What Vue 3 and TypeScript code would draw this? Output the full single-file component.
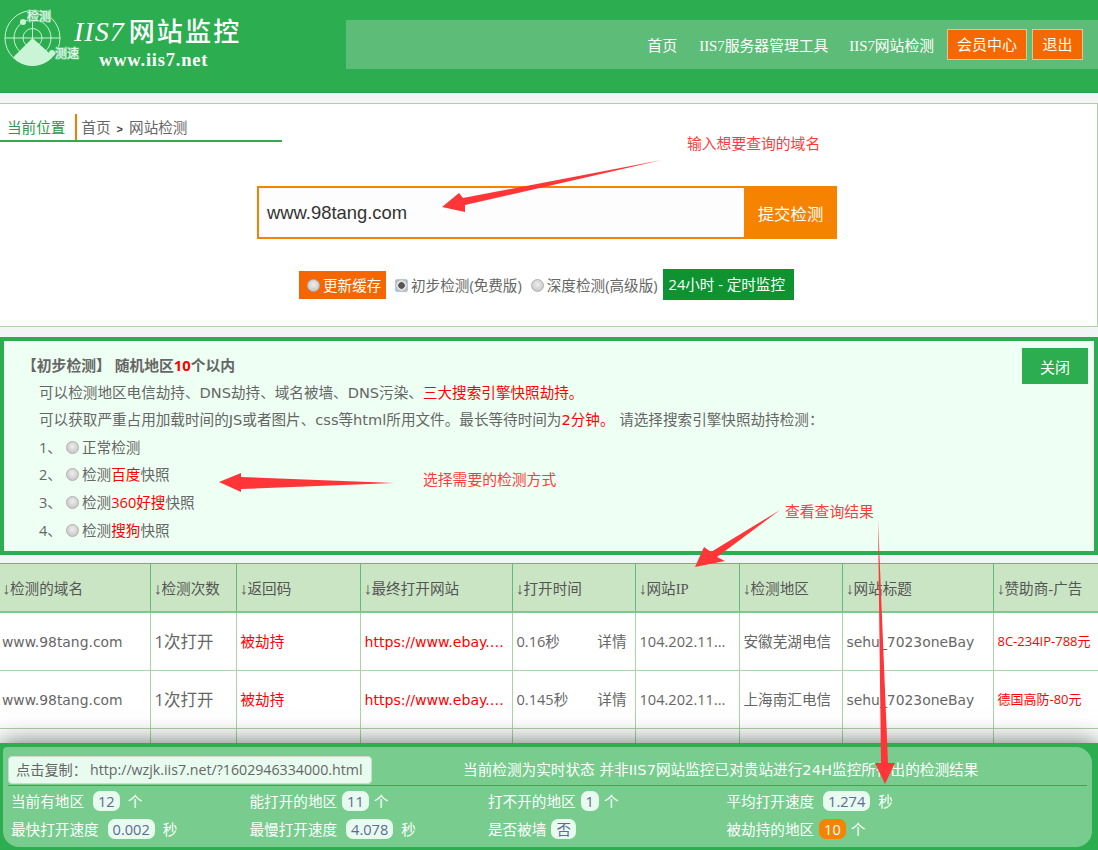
<script setup lang="ts">
interface Row { domain: string; count: string; code: string; url: string; time: string; ip: string; area: string; title: string; ad: string }
const heads: string[] = ['检测的域名', '检测次数', '返回码', '最终打开网站', '打开时间', '网站IP', '检测地区', '网站标题', '赞助商-广告']
const widths: number[] = [150, 86, 124, 152, 123, 104, 103, 151, 105]
const rows: Row[] = [
  { domain: 'www.98tang.com', count: '1次打开', code: '被劫持', url: 'https://www.ebay.com/', time: '0.16秒', ip: '104.202.117.36', area: '安徽芜湖电信', title: 'sehu_7023oneBay', ad: '8C-234IP-788元' },
  { domain: 'www.98tang.com', count: '1次打开', code: '被劫持', url: 'https://www.ebay.com/', time: '0.145秒', ip: '104.202.117.36', area: '上海南汇电信', title: 'sehu_7023oneBay', ad: '德国高防-80元' }
]
</script>

<template>
  <div class="page">
    <header class="header">
      <div class="logo">
        <svg class="logo-mark" width="84" height="72" viewBox="0 0 84 72">
          <circle cx="32.5" cy="38" r="27.5" fill="none" stroke="#c9f5d6" stroke-width="1" />
          <circle cx="32.5" cy="38" r="18.5" fill="none" stroke="#c9f5d6" stroke-width="1" />
          <circle cx="32.5" cy="38" r="9.5" fill="none" stroke="#c9f5d6" stroke-width="1" />
          <line x1="5" y1="38" x2="60" y2="38" stroke="#c9f5d6" stroke-width="1" />
          <line x1="32.5" y1="10" x2="32.5" y2="40" stroke="#c9f5d6" stroke-width="1" />
          <path d="M32.5 38 L13 57.5 A27.5 27.5 0 0 0 53 56.5 Z" fill="#c9f5d6" />
          <circle cx="23" cy="22" r="3" fill="#c9f5d6" />
          <circle cx="52" cy="53" r="3" fill="#c9f5d6" />
          <text x="27" y="21" class="logo-tag">检测</text>
          <text x="55" y="58" class="logo-tag">测速</text>
        </svg>
        <div class="logo-text">
          <div class="logo-title"><span class="logo-latin">IIS7</span>网站监控</div>
          <div class="logo-url">www.iis7.net</div>
        </div>
      </div>
      <nav class="nav">
        <a class="nav-link">首页</a>
        <a class="nav-link">IIS7服务器管理工具</a>
        <a class="nav-link">IIS7网站检测</a>
        <a class="nav-btn wide">会员中心</a>
        <a class="nav-btn">退出</a>
      </nav>
    </header>

    <section class="search-card">
      <div class="crumb">
        <span class="crumb-here">当前位置</span>
        <span class="crumb-path">首页<b>&gt;</b>网站检测</span>
      </div>
      <div class="search-box">
        <div class="search-input">www.98tang.com</div>
        <button class="search-btn">提交检测</button>
      </div>
      <div class="options">
        <span class="opt-cache"><i class="radio"></i>更新缓存</span>
        <span class="opt"><i class="radio checked"></i>初步检测(免费版)</span>
        <span class="opt"><i class="radio"></i>深度检测(高级版)</span>
        <span class="opt-timer">24小时 - 定时监控</span>
      </div>
    </section>

    <section class="info">
      <button class="close">关闭</button>
      <div class="info-title">【初步检测】 随机地区<em>10</em>个以内</div>
      <div class="info-line wide-latin">可以检测地区电信劫持、DNS劫持、域名被墙、DNS污染、<span class="red">三大搜索引擎快照劫持。</span></div>
      <div class="info-line wide-latin">可以获取严重占用加载时间的JS或者图片、css等html所用文件。最长等待时间为<span class="red">2分钟。</span> 请选择搜索引擎快照劫持检测：</div>
      <div class="info-line"><span class="num">1、</span><i class="radio"></i>正常检测</div>
      <div class="info-line"><span class="num">2、</span><i class="radio"></i>检测<span class="red">百度</span>快照</div>
      <div class="info-line"><span class="num">3、</span><i class="radio"></i>检测<span class="red">360好搜</span>快照</div>
      <div class="info-line"><span class="num">4、</span><i class="radio"></i>检测<span class="red">搜狗</span>快照</div>
    </section>

    <table class="result">
      <colgroup>
        <col v-for="(w, i) in widths" :key="i" :style="{ width: w + 'px' }" />
      </colgroup>
      <thead>
        <tr><th v-for="h in heads" :key="h"><span class="arrow">↓</span>{{ h }}</th></tr>
      </thead>
      <tbody>
        <tr v-for="(r, i) in rows" :key="i">
          <td class="latin">{{ r.domain }}</td>
          <td class="big">{{ r.count }}</td>
          <td class="red">{{ r.code }}</td>
          <td class="red latin url"><div class="clip">{{ r.url }}</div></td>
          <td><div class="time"><span>{{ r.time }}</span><span>详情</span></div></td>
          <td class="ip"><div class="clip">{{ r.ip }}</div></td>
          <td>{{ r.area }}</td>
          <td class="latin">{{ r.title }}</td>
          <td class="red ad">{{ r.ad }}</td>
        </tr>
        <tr class="empty"><td v-for="h in heads" :key="h"></td></tr>
      </tbody>
    </table>

    <footer class="summary">
      <div class="summary-inner">
        <div class="summary-top">
          <span class="copy">点击复制：<span class="copy-url">http://wzjk.iis7.net/?1602946334000.html</span></span>
          <span class="notice">当前检测为实时状态 并非IIS7网站监控已对贵站进行24H监控所得出的检测结果</span>
        </div>
        <div class="stats">
          <span>当前有地区<b class="pill">12</b>个</span>
          <span>能打开的地区<b class="pill tight">11</b>个</span>
          <span>打不开的地区<b class="pill tight">1</b>个</span>
          <span>平均打开速度<b class="pill">1.274</b>秒</span>
          <span>最快打开速度<b class="pill">0.002</b>秒</span>
          <span>最慢打开速度<b class="pill">4.078</b>秒</span>
          <span>是否被墙<b class="pill tight">否</b></span>
          <span>被劫持的地区<b class="pill orange tight">10</b>个</span>
        </div>
      </div>
    </footer>

    <svg class="marks" width="1098" height="850" viewBox="0 0 1098 850">
      <polygon points="442,207 459,193 463,198 662,160 465,205 465,212" />
      <polygon points="219,482 241,473 241,477 394,483 241,489 241,492" />
      <polygon points="695,567 704,547 711,552 780,510 717,557 725,561" />
      <polygon points="878,520 888,763 895,763 885,784 875,763 881,763" />
    </svg>
    <span class="note n1">输入想要查询的域名</span>
    <span class="note n2">选择需要的检测方式</span>
    <span class="note n3">查看查询结果</span>
  </div>
</template>

<style scoped>
.page {
  position: relative;
  width: 1098px;
  height: 850px;
  overflow: hidden;
  background: #f3f4f6;
  color: #666;
  font: 14.6px "Open Sans", "Noto Sans CJK SC", sans-serif;
}
.red { color: #f00; }
i { font-style: normal; }

.header {
  height: 93px;
  display: flex;
  align-items: flex-start;
  background: #2bad50;
  border-bottom: 1px solid #25a348;
  box-sizing: border-box;
}
.logo { width: 346px; display: flex; flex: none; }
.logo-mark { flex: none; }
.logo-tag {
  font: 400 12px "Noto Sans CJK SC", sans-serif;
  fill: #f2fff6;
  stroke: #6fcb8c;
  stroke-width: 1.5px;
  paint-order: stroke;
}
.logo-text { margin-left: -10px; color: #fff; }
.logo-title {
  margin-top: 14px;
  font: 500 26px/32px "Noto Sans CJK SC", serif;
  letter-spacing: 2.2px;
  white-space: nowrap;
}
.logo-latin {
  font: italic 400 28px/32px "Liberation Serif", serif;
  letter-spacing: 1px;
  margin-right: 4px;
}
.logo-url {
  margin: 1px 0 0 25px;
  font: 700 18.5px/22px "Liberation Serif", serif;
  letter-spacing: 0.8px;
}
.nav {
  flex: 1;
  height: 49px;
  margin-top: 20px;
  padding-right: 15px;
  display: flex;
  align-items: center;
  justify-content: flex-end;
  background: #5dbd78;
  color: #fff;
}
.nav-link { margin-right: 21px; white-space: nowrap; font-size: 14.8px; font-family: "Liberation Serif", "Noto Sans CJK SC", serif; }
.nav-link:first-child { margin-right: 22px; font-size: 15px; }
.nav-link:nth-child(3) { margin-right: 13px; }
.nav-btn {
  width: 51px;
  height: 31px;
  box-sizing: border-box;
  border: 1px solid #d8c89a;
  background: #f56800;
  line-height: 29px;
  text-align: center;
  font-size: 15px;
}
.nav-btn.wide { width: 80px; margin-right: 5px; }

.search-card {
  height: 224px;
  margin-top: 10px;
  box-sizing: border-box;
  border: 1px solid #a9d5a5;
  border-left: 0;
  background: #fff;
  overflow: hidden;
}
.crumb {
  width: 282px;
  height: 26px;
  margin-top: 10px;
  display: flex;
  border-bottom: 2px solid #2bad50;
  line-height: 27px;
}
.crumb-here { padding: 0 10px 0 7px; color: #2a9a4a; border-right: 2px solid #f57c00; white-space: nowrap; }
.crumb-path { padding-left: 4px; }
.crumb-path b { margin: 0 6px; font: 700 11px "Liberation Sans", sans-serif; color: #444; }
.search-box {
  width: 580px;
  height: 53px;
  margin: 44px 0 0 257px;
  display: flex;
  background: #f58300;
}
.search-input {
  flex: 1;
  margin: 2px 0 2px 2px;
  padding-left: 8px;
  background: #fdfdfd;
  color: #333;
  font: 18.4px/49px "Liberation Sans", sans-serif;
}
.search-btn {
  width: 93px;
  border: 0;
  padding: 0;
  background: #f58300;
  color: #fff;
  font: 16.4px "Noto Sans CJK SC", sans-serif;
}
.options {
  margin-top: 30px;
  padding-left: 299px;
  display: flex;
  align-items: center;
  font-size: 14.6px;
  line-height: 28px;
  white-space: nowrap;
}
.radio {
  display: inline-block;
  width: 11px;
  height: 11px;
  margin: 0 3px 3px 0;
  vertical-align: middle;
  border-radius: 50%;
  border: 1px solid #b0b0b0;
  background: radial-gradient(circle at 50% 40%, #eee, #bdbdbd);
}
.radio.checked {
  border: 1px solid #a9c8f5;
  border-radius: 2px;
  background: radial-gradient(circle, #555 0 3px, #ddd 3.5px 5px, #b8b8b8 5.5px);
}
.opt-cache { width: 87px; box-sizing: border-box; padding-left: 8px; background: #f56500; color: #fff; }
.opt { margin-left: 9px; }
.opt-timer {
  margin-left: 5px;
  padding: 1px 5px 2px 6px;
  background: #0e9330;
  color: #fff;
  width: 120px;
}

.info {
  position: relative;
  height: 218px;
  margin-top: 10px;
  box-sizing: border-box;
  padding: 11px 0 0 18px;
  border: 4px solid #2bad50;
  background: #eefff3;
  line-height: 27.6px;
}
.close {
  position: absolute;
  top: 7px;
  right: 6px;
  width: 66px;
  height: 36px;
  border: 0;
  padding: 0;
  background: #2bad50;
  color: #fff;
  font: 15px "Noto Sans CJK SC", sans-serif;
}
.info-title { font-weight: 700; font-size: 14.8px; margin-bottom: -1px; }
.info-title em { font-style: normal; color: #f00; }
.info-line { padding-left: 17px; white-space: nowrap; }
.wide-latin { font-family: "DejaVu Sans", "Noto Sans CJK SC", sans-serif; }
.num { display: inline-block; width: 27px; }
.info-line .radio { margin-right: 3px; }

.result {
  width: 1098px;
  margin-top: 8px;
  table-layout: fixed;
  border-collapse: collapse;
  background: #fff;
  font-size: 14.6px;
}
.result th {
  height: 47px;
  padding: 0 0 0 3px;
  text-align: left;
  font-weight: 400;
  font-family: "Liberation Serif", "Noto Sans CJK SC", serif;
  color: #555;
  background: #cae5c4;
  border: 1px solid #5fbd78;
  border-bottom: 2px solid #7cc98e;
  white-space: nowrap;
  overflow: hidden;
}
.arrow { display: inline-block; width: 8px; font: 16.5px/1 "Liberation Sans", sans-serif; }
.result td {
  height: 58px;
  padding: 0 4px 1px;
  border: 1px solid #a9d5a5;
  white-space: nowrap;
  overflow: hidden;
  box-sizing: border-box;
}
.result th:first-child, .result td:first-child { border-left: 0; padding-left: 2px; }
.result th:last-child, .result td:last-child { border-right: 0; }
.result td.latin { padding-top: 2px; padding-bottom: 0; font: 13.9px "DejaVu Sans", sans-serif; }
.result td.url { font-size: 14.1px; }
.result td.big { font-size: 16.5px; }
.result td.ip { padding-right: 10px; }
.result td.ad { font-size: 13px; padding-left: 4px; }
.clip { overflow: hidden; text-overflow: ellipsis; }
.time { display: flex; justify-content: space-between; padding-right: 4px; }
.empty td { height: 40px !important; }

.summary {
  position: absolute;
  left: 0;
  right: 0;
  bottom: 0;
  height: 107px;
  box-sizing: border-box;
  padding: 4px 6px 3px 3px;
  background: #2bad50;
  box-shadow: 0 0 24px rgba(0, 0, 0, 0.6);
  color: #fff;
}
.summary-inner {
  height: 100%;
  box-sizing: border-box;
  padding: 9px 0 0 5px;
  background: #77cc8e;
  border-radius: 4px 16px 16px 16px;
}
.summary-top {
  height: 29px;
  margin-right: 5px;
  display: flex;
  align-items: flex-start;
  border-bottom: 1px solid #2bad50;
}
.copy {
  width: 364px;
  height: 28px;
  box-sizing: border-box;
  flex: none;
  border: 1px solid #cfd8d2;
  border-radius: 4px;
  background: #e8fbef;
  color: #666;
  padding-left: 7px;
  font-size: 14.2px;
  line-height: 26px;
  white-space: nowrap;
}
.copy-url { margin-left: 3px; }
.notice {
  margin-left: 91px;
  white-space: nowrap;
  font: 14.65px/27px "DejaVu Sans", "Noto Sans CJK SC", sans-serif;
}
.stats {
  padding-left: 3px;
  display: grid;
  grid-template-columns: repeat(4, 238.5px);
  grid-auto-rows: 28px;
  align-items: center;
  font-size: 14.6px;
  white-space: nowrap;
}
.pill {
  display: inline-block;
  margin: 0 8px 0 9px;
  padding: 0 5px;
  border-radius: 7px;
  background: #e8fbef;
  color: #62689a;
  font-weight: 400;
  line-height: 20px;
}
.pill.tight { margin: 0 5px; }
.pill.orange { background: #f58300; color: #fff; }

.marks { position: absolute; inset: 0; pointer-events: none; }
.marks polygon { fill: #ff3538; }
.note { position: absolute; color: #ff3b3b; white-space: nowrap; line-height: 20px; font-size: 14.8px; }
.n1 { left: 687px; top: 133px; }
.n2 { left: 423px; top: 469px; }
.n3 { left: 785px; top: 501px; }
</style>

<style>
html, body { margin: 0; background: #f3f4f6; }
</style>
